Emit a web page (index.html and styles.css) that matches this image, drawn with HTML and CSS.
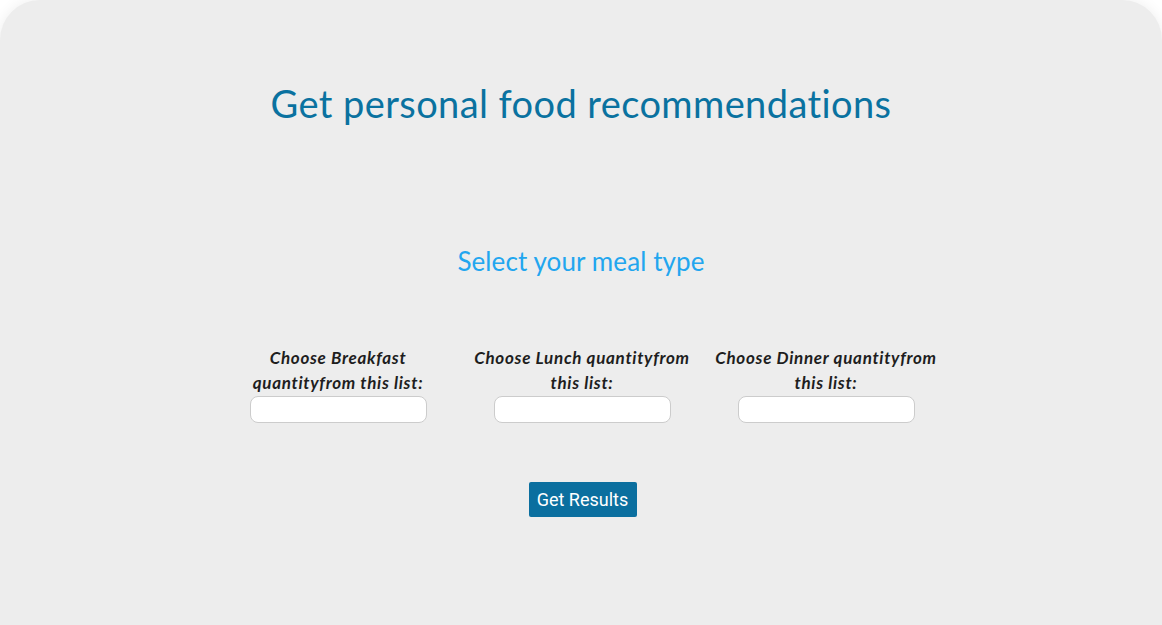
FILE: index.html
```html
<!DOCTYPE html>
<html lang="en">
<head>
<meta charset="utf-8">
<title>Food recommendations</title>
<link rel="stylesheet" href="styles.css">
</head>
<body>
<main class="card">
  <h1 class="title">Get personal food recommendations</h1>
  <h2 class="subtitle">Select your meal type</h2>
  <form class="meal-form">
    <div class="fields">
      <div class="field">
        <label class="field-label" for="breakfast">Choose Breakfast quantityfrom this list:</label>
        <input class="field-input" id="breakfast" type="text">
      </div>
      <div class="field">
        <label class="field-label" for="lunch">Choose Lunch quantityfrom this list:</label>
        <input class="field-input" id="lunch" type="text">
      </div>
      <div class="field">
        <label class="field-label" for="dinner">Choose Dinner quantityfrom this list:</label>
        <input class="field-input" id="dinner" type="text">
      </div>
    </div>
    <button class="submit" type="button">Get Results</button>
  </form>
</main>
</body>
</html>
```
FILE: styles.css
```css
html, body {
  margin: 0;
  padding: 0;
  background: #ffffff;
  height: 100%;
}
body {
  font-family: "Lato", "Open Sans", sans-serif;
  overflow: hidden;
}
.card {
  box-sizing: border-box;
  min-height: 640px;
  background: #ededed;
  border-radius: 40px 40px 0 0;
  box-shadow: 0 0 14px rgba(0, 0, 0, 0.07);
  display: flex;
  flex-direction: column;
  align-items: center;
  padding-top: 79px;
}
.title {
  margin: 0;
  font-weight: 400;
  font-size: 38px;
  line-height: 48px;
  color: #0a72a0;
  letter-spacing: 0.4px;
}
.subtitle {
  margin: 0;
  margin-top: 117px;
  font-weight: 400;
  font-size: 26px;
  line-height: 34px;
  color: #22a6ef;
  letter-spacing: 0.1px;
}
.meal-form {
  display: flex;
  flex-direction: column;
  align-items: center;
  margin-top: 67px;
}
.fields {
  display: flex;
  justify-content: center;
  padding-left: 2px;
}
.field {
  width: 244px;
  display: flex;
  flex-direction: column;
  align-items: center;
}
.field-label {
  width: 232px;
  text-align: center;
  font-style: italic;
  font-weight: 700;
  font-size: 17px;
  line-height: 25px;
  letter-spacing: 0.7px;
  color: #1e1e1e;
}
.field-input {
  box-sizing: border-box;
  width: 177px;
  height: 27px;
  margin-top: 1px;
  border: 1px solid #cccccc;
  border-radius: 8px;
  background: #ffffff;
}
.submit {
  margin-top: 59px;
  margin-left: 3px;
  width: 108px;
  height: 35px;
  padding: 0;
  border: none;
  border-radius: 2px;
  background: #0b6f9f;
  color: #ffffff;
  font-family: "Roboto", "Liberation Sans", sans-serif;
  font-size: 18px;
}
```
